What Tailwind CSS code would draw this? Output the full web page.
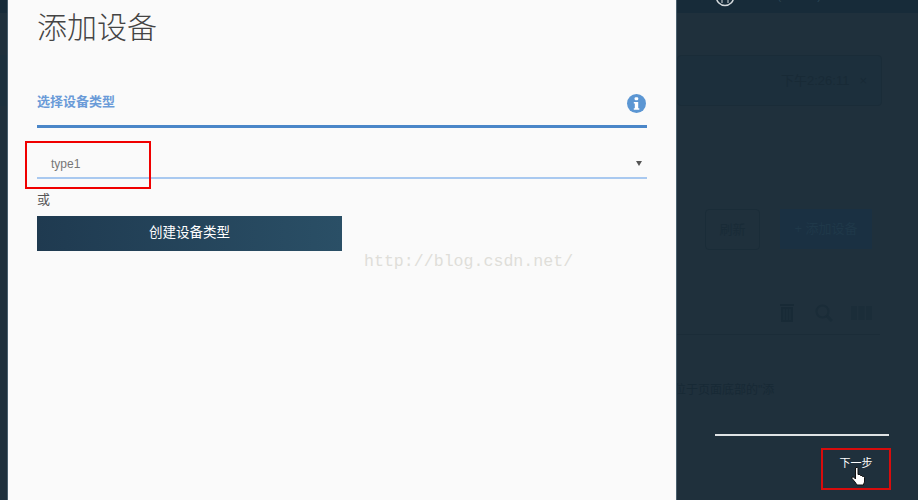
<!DOCTYPE html>
<html lang="zh-CN">
  <head>
    <meta charset="UTF-8" />
    <title>添加设备</title>
    <script src="https://cdn.jsdelivr.net/npm/@tailwindcss/browser@4"></script>
  </head>
  <body class="bg-[#1f303c]">
    <div class="relative flex w-[918px] h-[500px] overflow-hidden bg-[#1f303c] font-['Liberation_Sans','Noto_Sans_CJK_SC',sans-serif]">
      <!-- left strip of the page behind the dialog -->
      <div class="w-[7px] shrink-0">
        <div class="h-[13px] bg-[#172b39]"></div>
        <div class="mt-[42px] h-[51px] bg-[#1c303d]"></div>
      </div>

      <!-- dialog -->
      <div class="relative z-10 w-[670px] h-[500px] shrink-0 bg-[#fafafa] border-x border-[#4a5f6d] pl-[29px] pr-[29px]">
        <h1 class="mt-[8px] h-[40px] text-[30px] leading-[40px] font-light text-[#444]">添加设备</h1>

        <div class="mt-[40px] flex h-[40px] items-start justify-between border-b-[3px] border-[#4a86c8]">
          <span class="mt-[6px] text-[13px] leading-[16px] font-bold text-[#6a9bd8]">选择设备类型</span>
          <svg class="mt-[6px] mr-[1px]" width="19" height="19" viewBox="0 0 19 19">
            <circle cx="9.5" cy="9.5" r="9.5" fill="#5b96d3" />
            <rect x="7.6" y="3.2" width="3.6" height="3" rx="1" fill="#fff" />
            <path d="M6.8 8h4.4v6.2h1.1v1.6H6.8v-1.6h1v-4.6h-1z" fill="#fff" />
          </svg>
        </div>

        <div class="relative mt-[20px] flex h-[31px] items-start justify-between border-b-2 border-[#a9c9f0] pl-[14px] pr-[5px]">
          <span class="mt-[8px] text-[12px] leading-[16px] text-[#777]">type1</span>
          <span class="mt-[13px] h-0 w-0 border-x-[3px] border-t-[5px] border-x-transparent border-t-[#555]"></span>
          <div class="absolute left-[-12px] top-[-7px] w-[126px] h-[48px] border-[2.5px] border-[#f00000]"></div>
        </div>

        <p class="mt-[12px] h-[17px] text-[13px] leading-[17px] text-[#555]">或</p>
        <button class="mt-[8px] block w-[305px] h-[35px] bg-gradient-to-r from-[#1f3a50] to-[#2a4f66] text-[13.5px] text-white">创建设备类型</button>

        <!-- blog watermark -->
        <div class="absolute left-[356px] top-[251px] text-[16.6px] leading-[22px] font-['Liberation_Mono','DejaVu_Sans_Mono',monospace] text-[#dfded9]">http://blog.csdn.net/</div>
      </div>

      <!-- dimmed page on the right -->
      <div class="flex-1 min-w-0">
        <div class="flex h-[13px] items-start overflow-hidden bg-[#172b39] pl-[38px]">
          <svg class="mt-[-13px] shrink-0" width="20" height="20" viewBox="0 0 20 20" fill="none" stroke="#d4d9dc" stroke-width="1.5">
            <circle cx="10" cy="10" r="8.6" />
            <path d="M7 13v3M13 13v3" stroke-width="1" />
          </svg>
          <span class="ml-[15px] mt-[-13px] whitespace-nowrap text-[12px] leading-[16px] text-[#2a4453]">帮助 (xxxxxx)</span>
        </div>

        <div class="mt-[42px] mr-[36px] flex h-[51px] items-center justify-end rounded-sm border border-[#1a2c38] bg-[#1c2f3c] pr-[14px] text-[13px] text-[#182a36]">
          <span>下午2:26:11</span><span class="ml-[10px]">×</span>
        </div>

        <div class="mt-[103px] mr-[46px] flex justify-end gap-[20px] text-[13px]">
          <div class="flex w-[55px] h-[41px] items-center justify-center rounded-sm border border-[#1a2c38] text-[#192b37]">刷新</div>
          <div class="flex w-[92px] h-[40px] items-center justify-center bg-[#1a3042] text-[#1f3849]">+ 添加设备</div>
        </div>

        <div class="mt-[53px] mr-[38px] flex h-[32px] items-start justify-end border-b border-[#1b2c38] pr-[8px]">
          <svg width="14" height="19" viewBox="0 0 14 19" fill="#182a36">
            <path d="M0 1h14v2H0zM1 4h12v15H1z" />
            <path d="M4 6v11M7 6v11M10 6v11" stroke="#1f303c" />
          </svg>
          <svg class="ml-[21px] mt-[1px]" width="18" height="18" viewBox="0 0 18 18" fill="none" stroke="#1a2c38" stroke-width="2">
            <circle cx="7.500" cy="7.500" r="6" />
            <path d="M12 12l5 5" stroke-width="3" />
          </svg>
          <svg class="ml-[18px] mt-[3px]" width="21" height="14" viewBox="0 0 21 14" fill="#1b2d39">
            <path d="M0 0h6v14H0zM7.500 0h6v14h-6zM15 0h6v14h-6z" />
          </svg>
        </div>

        <p class="mt-[46px] -ml-[3px] h-[18px] whitespace-nowrap text-[12px] leading-[18px] text-[#172935]">位于页面底部的"添</p>

        <div class="mt-[35px] ml-[38px] mr-[29px] h-[2px] bg-[#dfe3e5]"></div>

        <div class="mt-[12px] ml-[144px] flex w-[70px] h-[42px] items-start justify-center border-[2.5px] border-[#d80c0c] pt-[5px] text-[11px] leading-[16px] text-white">下一步</div>
      </div>

      <!-- mouse pointer in the screenshot -->
      <svg class="absolute left-[851px] top-[466px] z-20" width="16" height="20" viewBox="0 0 16 20">
        <path d="M4.500 1.500h2l.5 1V8.500h2l.5 1h1.500l.5 1h1.200l.8 1V16l-1.200 3H6L4 16 1 12.500V11h1.500l2 2z" fill="#fff" stroke="#111" stroke-width="1" />
      </svg>
    </div>
  </body>
</html>
